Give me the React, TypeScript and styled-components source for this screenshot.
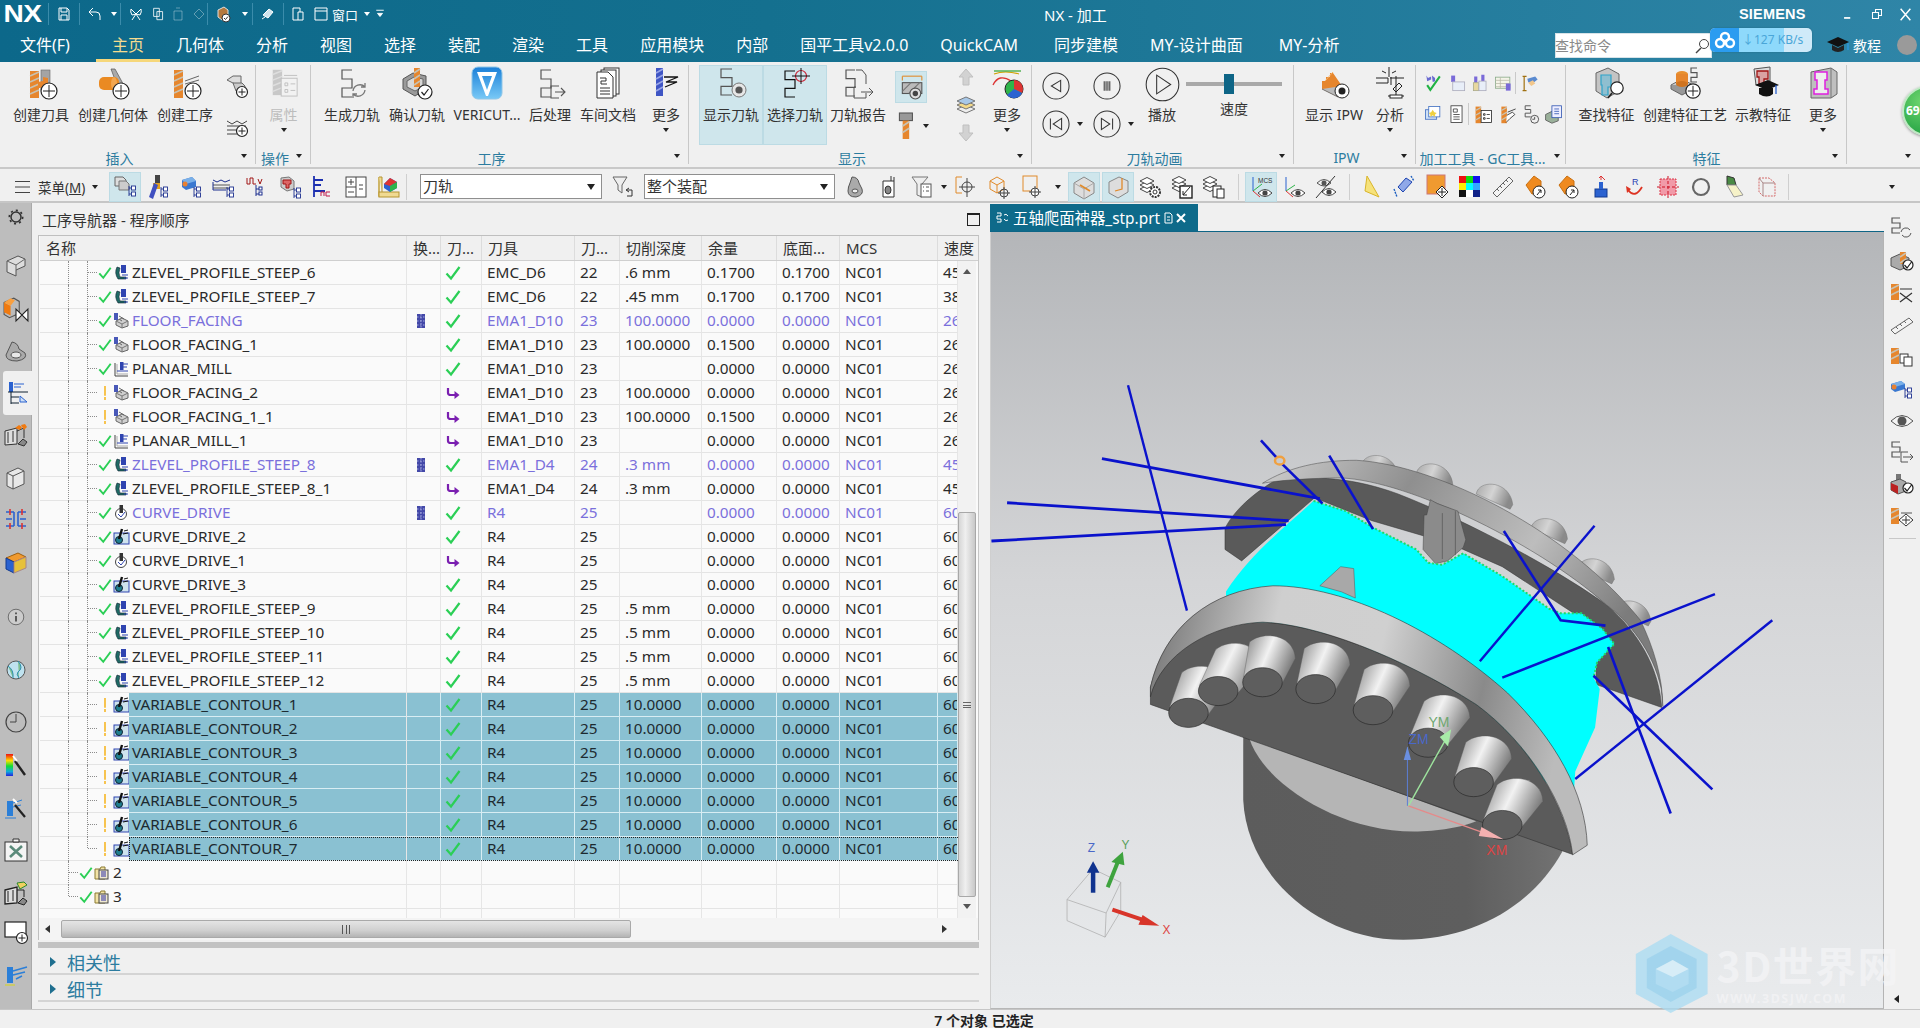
import React from 'react';
import styled, { createGlobalStyle, css } from 'styled-components';

const Global = createGlobalStyle`
  html, body { margin: 0; padding: 0; width: 1920px; height: 1028px; overflow: hidden; background: #f0f0f0; }
  * { box-sizing: border-box; }
  body { font-family: "Noto Sans", "Noto Sans CJK SC", sans-serif; color: #222; }
`;

const Page = styled.div`
  width: 1920px; height: 1028px; display: flex; flex-direction: column; position: relative; overflow: hidden;
`;
const Head = styled.header`
  height: 62px; flex: none; color: #fff;
  background: linear-gradient(90deg, #0c688a 0%, #14708f 40%, #2f85a7 100%);
`;
const TitleBar = styled.div`display: flex; align-items: center; height: 28px;`;
const Logo = styled.div`
  width: 48px; padding-left: 3px; font: bold 24px/28px "Liberation Sans", sans-serif; letter-spacing: -0.5px; flex: none;
  transform: scaleX(1.17); transform-origin: left;
`;
const Quick = styled.div`display: flex; align-items: center; width: 996px; flex: none; height: 28px;`;
const QSlot = styled.div<{ $w: number }>`
  width: ${p => p.$w}px; flex: none; display: flex; align-items: center; justify-content: center; height: 28px;
  font-size: 13px; white-space: nowrap;
`;
const QSep = styled.div`width: 1px; height: 22px; background: #3b8cab; flex: none;`;
const DocTitle = styled.div`font-size: 15px; white-space: nowrap; flex: 1;`;
const Brand = styled.div`
  font: bold 14.5px/28px "Liberation Sans", sans-serif; width: 94px; flex: none; letter-spacing: .2px;
`;
const WinBtn = styled.div`width: 29px; flex: none; display: flex; justify-content: center; align-items: center; height: 28px;`;

const TabRow = styled.div`display: flex; height: 34px; align-items: stretch; position: relative;`;
const Tab = styled.div<{ $active?: boolean; $extra?: number }>`
  padding: 0 ${p => 16 + (p.$extra ?? 0)}px 0 16px; font-size: 16px; line-height: 34px; white-space: nowrap; height: 34px; flex: none;
  ${p => p.$active && css`color: #f5dc8f; border-bottom: 3px solid #f6d77a;`}
`;
const FileTab = styled(Tab)`padding: 0 9px 0 20px; width: 96px;`;
const TabFill = styled.div`flex: 1;`;
const SearchBox = styled.div`
  width: 157px; height: 25px; background: #fff; margin-top: 5px; flex: none; color: #8a8a8a; font-size: 14px; line-height: 25px;
  display: flex; justify-content: space-between; align-items: center; padding-right: 2px; box-shadow: inset 0 0 0 1px #d7e3e8; margin-right: 208px;
`;
const Tutorial = styled.div`
  position: absolute; left: 1826px; top: 0; height: 34px; width: 94px; display: flex; align-items: center; gap: 3px; font-size: 14px;
`;
const Avatar = styled.div`width: 20px; height: 20px; border-radius: 50%; background: #9a9a9a; margin-left: 13px; flex: none;`;

const Cloud = styled.div`
  position: absolute; left: 1710px; top: 28px; width: 102px; height: 24px; border-radius: 5px; overflow: hidden; display: flex;
  background: #cfeaf9; font-size: 12px; color: #4aa6d8; line-height: 24px; box-shadow: 0 0 2px rgba(0,0,0,.2);
`;
const CloudIcon = styled.div`width: 29px; background: #2b9cf0; flex: none; display: flex; align-items: center; justify-content: center;`;
const CloudRate = styled.div`flex: 1; background: linear-gradient(90deg, #8ed9fb 0 62%, transparent 62%); padding-left: 3px; white-space: nowrap;`;

const Ball = styled.div`
  position: absolute; left: 1902px; top: 86px; width: 50px; height: 50px; border-radius: 50%;
  background: radial-gradient(circle at 40% 30%, #6ed66f, #2faa4a 70%); border: 2px solid #bfe8c4; color: #fff;
  font: bold 12px/46px "Noto Sans", sans-serif; padding-left: 2px; box-shadow: 0 1px 3px rgba(0,0,0,.4);
`;

const Ribbon = styled.div`height: 107px; flex: none; display: flex; background: #f0f0f0; border-bottom: 2px solid #c9c9c9; position: relative;`;
const Group = styled.section<{ $w: number; $end?: boolean }>`
  width: ${p => p.$w}px; flex: none; display: flex; flex-direction: column; position: relative;
  ${p => !p.$end && css`&::after { content: ""; position: absolute; right: 0; top: 3px; bottom: 3px; width: 1px; background: #c8c8c8; }`}
`;
const GroupBody = styled.div<{ $pl?: number }>`height: 83px; display: flex; padding-left: ${p => p.$pl ?? 0}px; flex: none;`;
const GroupFoot = styled.div<{ $pr?: number }>`
  flex: 1; display: flex; align-items: center; justify-content: center; position: relative; color: #2c7c9f; font-size: 14px; white-space: nowrap; padding: 3px ${p => p.$pr ?? 17}px 0 0;
`;
const Caret = styled.span<{ $light?: boolean }>`
  display: inline-block; width: 0; height: 0; border-left: 3.5px solid transparent; border-right: 3.5px solid transparent; border-top: 4.5px solid ${p => (p.$light ? '#fff' : '#222')}; flex: none;
`;
const FootCaret = styled(Caret)<{ $r?: number }>`position: absolute; right: ${p => p.$r ?? 9}px; top: 9px;`;
const Large = styled.div<{ $w: number; $on?: boolean }>`
  width: ${p => p.$w}px; flex: none; display: flex; flex-direction: column; align-items: center; padding-top: 5px; font-size: 14px; color: #333; white-space: nowrap;
  ${p => p.$on && css`background: #cfe6ec; box-shadow: inset 0 0 0 1px #bcdbe4; margin-top: 3px; padding-top: 2px;`}
`;
const LargeIcon = styled.div`height: 38px; display: flex; align-items: flex-start; justify-content: center; flex: none;`;
const LargeText = styled.div<{ $dim?: boolean }>`line-height: 20px; height: 20px; ${p => p.$dim && 'color:#bdbdbd;'}`;
const MoreCaret = styled(Caret)`margin-top: 3px;`;
const SmallCol = styled.div<{ $w: number; $ml?: number }>`
  width: ${p => p.$w}px; margin-left: ${p => p.$ml ?? 0}px; flex: none; display: flex; flex-direction: column; align-items: center; justify-content: space-around; padding: 4px 0 1px;
`;
const SmallRow = styled.div`display: flex; align-items: center; justify-content: center; gap: 3px;`;
const Ghost = styled.div`width: 32px; height: 32px; background: #cfe6ec; box-shadow: inset 0 0 0 1px #bcdbe4; display: flex; align-items: center; justify-content: center;`;
const AnimBlock = styled.div`width: 102px; flex: none; display: flex; flex-direction: column; gap: 8px; padding-top: 9px;`;
const AnimRow = styled.div`display: flex;`;
const AnimSlot = styled.div`width: 51px; height: 30px; display: flex; align-items: center; justify-content: flex-start; gap: 7px;`;
const SliderWrap = styled.div`width: 96px; flex: none; margin-left: 6px; display: flex; flex-direction: column; align-items: center; font-size: 14px; color: #333;`;
const Track = styled.div`width: 96px; height: 20px; margin-top: 12px; position: relative; flex: none; &::before { content: ""; position: absolute; left: 0; right: 0; top: 8px; height: 4px; background: #a9a9a9; }`;
const Thumb = styled.div`position: absolute; left: 38px; top: 0; width: 10px; height: 20px; background: #0e6586;`;
const SpeedText = styled.div`margin-top: 5px; line-height: 20px;`;
const ToolGrid = styled.div`display: flex; flex-direction: column; padding: 9px 0 0 6px; gap: 7px; width: 100%;`;
const ToolLine = styled.div`display: flex; align-items: center; height: 24px;`;
const ToolCell = styled.div<{ $w: number }>`width: ${p => p.$w}px; flex: none; display: flex; justify-content: center; align-items: center;`;
const VSep = styled.div`width: 1px; height: 22px; background: #c9c9c9; flex: none;`;

const Toolbar = styled.div`height: 34px; flex: none; display: flex; align-items: center; background: #f0f0f0; border-bottom: 2px solid #c6c6c6; padding-top: 3px;`;
const MenuBtn = styled.div`width: 109px; flex: none; display: flex; align-items: center; padding-left: 14px; font-size: 13.5px; color: #333; gap: 7px;`;
const MenuText = styled.span`white-space: nowrap; u { text-decoration: underline; }`;
const Tb = styled.div<{ $on?: boolean; $w?: number; $ml?: number }>`
  width: ${p => p.$w ?? 33}px; margin-left: ${p => p.$ml ?? 0}px; height: 30px; flex: none; display: flex; align-items: center; justify-content: center;
  ${p => p.$on && css`background: #cfe6ec; box-shadow: inset 0 0 0 1px #bcdbe4;`}
`;
const TbSep = styled.div<{ $ml?: number; $mr?: number }>`
  width: 1px; height: 26px; background: #cfcfcf; flex: none; margin: 0 ${p => p.$mr ?? 7}px 0 ${p => p.$ml ?? 0}px;
`;
const Combo = styled.div<{ $w: number }>`
  width: ${p => p.$w}px; height: 25px; flex: none; background: #fff; border: 1px solid #8f8f8f; font-size: 15px; padding: 0 2px; line-height: 23px;
  display: flex; justify-content: space-between; align-items: center; color: #333;
`;
const ComboCaret = styled(Caret)`border-left-width: 4px; border-right-width: 4px; border-top-width: 6px; margin-right: 4px;`;
const TailCaret = styled(Caret)`margin-left: 90px;`;

const Main = styled.main`flex: 1; display: flex; min-height: 0; background: #f0f0f0;`;
const Side = styled.nav`width: 32px; flex: none; background: #bdbdbd; border-right: 1px solid #a9a9a9;`;
const SideItem = styled.div<{ $h: number; $mt: number; $on?: boolean }>`
  height: ${p => p.$h}px; margin-top: ${p => p.$mt}px; display: flex; align-items: center; justify-content: center;
  ${p => p.$on && css`margin-left: 3px; margin-right: -1px; background: #f0f0f0; border-radius: 3px 0 0 3px;`}
`;
const Nav = styled.section`width: 958px; flex: none; display: flex; flex-direction: column; padding-left: 6px;`;
const NavTitle = styled.div`height: 32px; flex: none; display: flex; justify-content: space-between; align-items: center; padding: 0 8px 0 4px; font-size: 15px; color: #333;`;
const MaxBox = styled.div`width: 13px; height: 13px; border: 1.5px solid #222; border-top-width: 2px; margin-right: 2px;`;
const TableBox = styled.div`width: 941px; flex: none; border: 1px solid #bfbfbf; border-bottom: 0; border-right-color: #c6c6c6; padding-left: 1px; background: #fafafa;`;
const GridCols = css`display: grid; grid-template-columns: 367px 34px 41px 93px 45px 82px 75px 63px 98px 20px;`;
const HeadRow = styled.div`
  display: grid; grid-template-columns: 367px 34px 41px 93px 45px 82px 75px 63px 98px 38px; height: 25px; background: #f0f0f0; border-bottom: 1px solid #cfcfcf; font-size: 15px; color: #333;
`;
const HeadCell = styled.div`padding-left: 6px; line-height: 25px; white-space: nowrap; overflow: hidden; border-right: 1px solid #dcdcdc; &:last-child { border-right: 0; }`;
const BodyWrap = styled.div`display: flex; height: 657px;`;
const List = styled.div`width: 918px; flex: none; overflow: hidden; position: relative;`;
const Row = styled.div`
  ${GridCols}; height: 24px; font-size: 15.3px; width: 918px;
`;
const Cell = styled.div<{ $sel?: boolean; $blue?: boolean }>`
  padding-left: 5px; line-height: 23px; height: 24px; white-space: nowrap; overflow: hidden; border-right: 1px solid #e6e6e6; border-bottom: 1px solid #e4e4e4;
  color: ${p => (p.$blue ? '#7a70dc' : '#2a2a2a')};
  display: flex; align-items: center;
  ${p => p.$sel && css`background: #8ac1d2; border-bottom-color: #d8edf3; border-right-color: #d8edf3; color: #1d2a30;`}
`;
const ChangeCell = styled(Cell)`padding-left: 7px;`;
const StateCell = styled(Cell)`padding-left: 4px;`;
const NameCell = styled.div<{ $lv: number; $last?: boolean }>`
  position: relative; display: flex; align-items: center; height: 24px; border-right: 1px solid #e6e6e6; border-bottom: 1px solid #e4e4e4;
  padding-left: ${p => (p.$lv === 2 ? 58 : 39)}px;
  &::before {
    content: ""; position: absolute; left: 28px; top: 0; bottom: ${p => (p.$lv === 1 && p.$last ? '12px' : '-1px')};
    border-left: 1px dotted #8c8c8c;
  }
`;
const Trunk = styled.span<{ $end?: boolean }>`
  position: absolute; left: 47px; top: 0; bottom: ${p => (p.$end ? '12px' : '-1px')}; border-left: 1px dotted #8c8c8c;
`;
const Twig = styled.span<{ $lv: number }>`
  position: absolute; left: ${p => (p.$lv === 2 ? 48 : 29)}px; top: 11px; width: 9px; border-top: 1px dotted #8c8c8c;
`;
const NameIcons = styled.div`display: flex; align-items: center; flex: none; width: 31px; height: 23px; gap: 1px;`;
const NameText = styled.div<{ $sel?: boolean; $blue?: boolean }>`
  flex: 1; height: 23px; line-height: 23px; padding-left: 3px; white-space: nowrap; color: ${p => (p.$blue ? '#7a70dc' : '#2a2a2a')};
  ${p => p.$sel && css`background: #8ac1d2; color: #1d2a30; box-shadow: 0 1px 0 #d8edf3;`}
`;
const Focus = styled.div`
  position: absolute; left: 89px; right: 0; top: 576px; height: 24px; border: 1px dotted #222; border-right: 0; pointer-events: none;
`;
const ColGuide = styled.div`${GridCols}; height: 11px;`;
const ColLine = styled.div`border-right: 1px solid #e6e6e6;`;
const VScroll = styled.div`width: 18px; flex: none; background: #f2f2f2; display: flex; flex-direction: column; align-items: center; position: relative;`;
const VThumb = styled.div`
  width: 18px; height: 385px; margin-top: 238px; background: linear-gradient(90deg, #d6d6d6, #efefef 40%, #c8c8c8); border: 1px solid #a8a8a8; border-radius: 2px; flex: none;
  display: flex; align-items: center; justify-content: center;
`;
const VGrip = styled.div`width: 8px; height: 6px; border-top: 1px solid #666; border-bottom: 1px solid #666; position: relative; &::after { content: ""; position: absolute; left: 0; right: 0; top: 2px; height: 1px; background: #666; }`;
const UpArrow = styled.span`display: block; margin-top: 8px; width: 0; height: 0; border-left: 4px solid transparent; border-right: 4px solid transparent; border-bottom: 5px solid #555; flex: none;`;
const DownArrow = styled.span`display: block; margin-top: 7px; width: 0; height: 0; border-left: 4px solid transparent; border-right: 4px solid transparent; border-top: 5px solid #555; flex: none;`;
const HScroll = styled.div`width: 941px; height: 22px; flex: none; display: flex; align-items: center; background: #f4f4f4; border-left: 1px solid #bfbfbf; border-right: 1px solid #c6c6c6; padding-left: 6px;`;
const LeftArr = styled.span`width: 0; height: 0; border-top: 4px solid transparent; border-bottom: 4px solid transparent; border-right: 5px solid #333; margin-right: 11px; flex: none;`;
const RightArr = styled.span`width: 0; height: 0; border-top: 4px solid transparent; border-bottom: 4px solid transparent; border-left: 5px solid #333; margin-left: 311px; flex: none;`;
const HThumb = styled.div`
  width: 570px; height: 18px; background: linear-gradient(180deg, #e4e4e4, #cfcfcf 60%, #b4b4b4); border: 1px solid #a9a9a9; border-radius: 2px; flex: none; display: flex; align-items: center; justify-content: center;
`;
const HGrip = styled.div`width: 8px; height: 9px; border-left: 1px solid #555; border-right: 1px solid #555; position: relative; &::after { content: ""; position: absolute; top: 0; bottom: 0; left: 2.5px; width: 1px; background: #555; }`;
const Stripe = styled.div`height: 6px; flex: none; width: 941px; background: #c2c2c2; margin-top: 2px;`;
const Fold = styled.div`
  height: 27px; flex: none; width: 941px; display: flex; align-items: center; border-bottom: 2px solid #d4d4d4; padding: 2px 0 0 12px; color: #2c7c9f; font-size: 18px; gap: 11px;
`;
const FoldArrow = styled.span`width: 0; height: 0; border-top: 5.5px solid transparent; border-bottom: 5.5px solid transparent; border-left: 6px solid #1f6f8f; flex: none;`;

const Stage = styled.section`flex: 1; display: flex; flex-direction: column; min-width: 0;`;
const DocTabs = styled.div`height: 29px; flex: none; display: flex; align-items: flex-end; background: #f0f0f0; border-bottom: 1px solid #0e6586;`;
const DocTab = styled.div`
  width: 208px; height: 27px; background: #0e6a8a; color: #fff; display: flex; align-items: center; padding: 0 5px; font-size: 15.4px; gap: 3px; white-space: nowrap;
`;
const View = styled.div`
  flex: 1; position: relative; background: linear-gradient(180deg, #b4b6b9 0%, #d4d5d7 45%, #e9ebed 100%); border-right: 1px solid #b4b4b4; border-left: 1px solid #cfcfcf; border-bottom: 1px solid #b7b7b7;
`;
const Scene = styled.svg`position: absolute; left: 0; top: 0; width: 100%; height: 100%; overflow: visible; display: block;`;
const Strip = styled.aside`width: 36px; flex: none; padding-top: 10px; display: flex; flex-direction: column; align-items: center; position: relative;`;
const StripItem = styled.div`height: 32px; flex: none; display: flex; align-items: center; justify-content: center;`;
const StripSep = styled.div`width: 27px; height: 1px; background: #c8c8c8; margin-top: 5px; flex: none;`;
const StripArrow = styled.span`
  position: absolute; left: 10px; bottom: 6px; width: 0; height: 0; border-top: 4px solid transparent; border-bottom: 4px solid transparent; border-right: 5px solid #222;
`;
const Status = styled.footer`
  height: 19px; flex: none; background: #f0f0f0; text-align: center; font-size: 14px; line-height: 21px; font-weight: 600; color: #222; padding-left: 48px; border-top: 1px solid #c6c6c6;
`;

const IconSvg = styled.svg<{ $s: number }>`width: ${p => p.$s}px; height: ${p => p.$s}px; display: block; flex: none; overflow: visible;`;

/* ------ drawing primitives ------ */
const Bit = ({ x, y, w = 9, h = 28, c = '#e6862d', s = '#c8c2b2' }: any) => (
  <g>
    <rect x={x} y={y} width={w} height={h} fill={c} />
    {Array.from({ length: Math.floor(h / 6) }).map((_, i) => (
      <path key={i} d={`M${x} ${y + i * 6 + 5}L${x + w} ${y + i * 6 + 1}`} stroke={s} strokeWidth="1.6" />
    ))}
  </g>
);
const Plus = ({ cx, cy, r = 8 }: any) => (
  <g>
    <circle cx={cx} cy={cy} r={r} fill="#fff" stroke="#222" strokeWidth="1.2" />
    <path d={`M${cx - r + 2} ${cy}H${cx + r - 2}M${cx} ${cy - r + 2}V${cy + r - 2}`} stroke="#222" strokeWidth="1" />
  </g>
);
const Chk = ({ cx, cy, r = 7.5 }: any) => (
  <g>
    <circle cx={cx} cy={cy} r={r} fill="#fff" stroke="#222" strokeWidth="1.2" />
    <path d={`M${cx - 3.5} ${cy}l2.5 3l4.5 -6`} stroke="#222" strokeWidth="1.2" fill="none" />
  </g>
);
const Sp = ({ x, y, w = 10, h = 24, c = '#555', sw = 1.2 }: any) => (
  <path d={`M${x + w} ${y}H${x}V${y + h / 3}H${x + w}V${y + (2 * h) / 3}H${x}V${y + h}H${x + w}`} fill="none" stroke={c} strokeWidth={sw} />
);
const Tr = ({ x, y, c = '#1c2f8e' }: any) => (
  <g stroke={c} fill="#fff" strokeWidth=".9">
    <path d={`M${x} ${y}v10M${x} ${y + 2}h2.5M${x} ${y + 8}h2.5`} fill="none" />
    <rect x={x + 2.5} y={y} width="4" height="4" />
    <rect x={x + 2.5} y={y + 6} width="4" height="4" />
  </g>
);
const EyeS = ({ cx, cy }: any) => (
  <g>
    <path d={`M${cx - 7} ${cy}Q${cx} ${cy - 7} ${cx + 7} ${cy}Q${cx} ${cy + 7} ${cx - 7} ${cy}Z`} fill="#fff" stroke="#444" />
    <circle cx={cx} cy={cy} r="2.6" fill="#444" />
  </g>
);
const Layers = ({ x, y }: any) => (
  <g fill="#fff" stroke="#444" strokeWidth="1">
    <path d={`M${x} ${y + 10}l7 -3.5l7 3.5l-7 3.5Z`} />
    <path d={`M${x} ${y + 6}l7 -3.5l7 3.5l-7 3.5Z`} />
    <path d={`M${x} ${y + 2}l7 -3.5l7 3.5l-7 3.5Z`} />
  </g>
);

/* ------ 32 px ribbon pictures ------ */
const big: Record<string, React.ReactNode> = {
  createTool: (<g><rect x="16" y="3" width="9" height="20" fill="#a4a4a4" stroke="#666" strokeWidth=".6" /><Bit x={5} y={4} w={9} h={27} /><path d="M13 15l5-1v-4l5 1v8l-8 2h-2z" fill="#e6862d" /><Plus cx={24} cy={24} /></g>),
  createGeom: (<g><path d="M14 2l4 0l12 22l-6 5z" fill="#a9a9a9" stroke="#555" strokeWidth=".7" /><rect x="2" y="10" width="20" height="13" rx="5" fill="#ea8a22" /><ellipse cx="17" cy="16.5" rx="3" ry="6.5" fill="#f2a650" /><Plus cx={24} cy={24} /></g>),
  createOp: (<g><Bit x={5} y={3} w={9} h={28} /><path d="M16 14L30 9M16 17L30 13M17 20L28 17" stroke="#666" fill="none" /><Plus cx={24} cy={24} /></g>),
  attr: (<g opacity=".55"><Bit x={4} y={3} w={10} h={27} c="#a8a8a8" s="#d0d0d0" /><rect x="13" y="12" width="17" height="19" fill="#f4f4f4" stroke="#999" /><path d="M17 17h3v3h-3zM23 18h5M17 24h3v3h-3zM23 25h5M16 9H30" stroke="#999" fill="none" /></g>),
  gen: (<g><Sp x={6} y={3} w={10} h={27} /><path d="M17 24a7 7 0 0 1 12-4M29 23a7 7 0 0 1-12 4M29 16v4h-4M17 31v-4h4" fill="none" stroke="#777" strokeWidth="1.3" /></g>),
  verify: (<g><path d="M2 12L12 6L25 9V22L14 29L2 22Z" fill="#9a9a9a" stroke="#555" /><path d="M6 14l7-4l9 2v8l-8 4l-8-4z" fill="#d8d8d8" stroke="#666" /><Bit x={13} y={1} w={6} h={19} /><Chk cx={24} cy={25} r={7} /></g>),
  vericut: (<g><defs><linearGradient id="vg" x1="0" y1="0" x2="0" y2="1"><stop offset="0" stopColor="#1a7fd8" /><stop offset="1" stopColor="#79c9f6" /></linearGradient></defs><rect x="1" y="0" width="30" height="32" rx="6" fill="url(#vg)" stroke="#8fc6e8" /><path fillRule="evenodd" d="M6 5H26L17 29H15ZM11 9L16 23L21 9Z" fill="#fff" /></g>),
  post: (<g><Sp x={7} y={3} w={10} h={27} /><path d="M25 19h-8v12h8M21 25h10M27 21l4 4l-4 4" fill="none" stroke="#555" strokeWidth="1.1" /></g>),
  doc: (<g fill="#fff" stroke="#333"><rect x="12" y="1" width="15" height="26" /><rect x="9" y="3" width="15" height="26" /><path d="M5 5H16L21 10V31H5Z" /><path d="M8 11h6v3H9v3h6M8 21h10M8 24h10M8 27h10" fill="none" /></g>),
  moreOp: (<g><Bit x={6} y={1} w={7} h={28} c="#3f55c4" s="#9aa6e8" /><path d="M14 10H28L16 15H27L15 20" stroke="#111" fill="none" strokeWidth="1.3" /></g>),
  show: (<g><Sp x={6} y={2} w={11} h={26} /><circle cx="24" cy="23" r="7" fill="#e6e6e6" stroke="#777" /><circle cx="24" cy="23" r="3.6" fill="#555" /></g>),
  sel: (<g><Sp x={6} y={4} w={10} h={26} c="#111" /><circle cx="22" cy="9" r="5.5" fill="none" stroke="#c23" strokeWidth="1.2" /><path d="M13 9H31M22 1V17" stroke="#111" /></g>),
  report: (<g><Sp x={4} y={3} w={9} h={26} /><path d="M14 3H20L24 8V17M14 20H12V31H24V26" fill="none" stroke="#555" /><path d="M19 25H31M27 21l4 4l-4 4" fill="none" stroke="#555" /></g>),
  stairs: (<g><path d="M4 22V14H8V10H12V6H15L24 19L20 30Z" fill="#e6862d" /><path d="M4 22L20 30L24 19" fill="#bbb" stroke="#777" /><path d="M7 14L15 5" stroke="#f7b56d" /><circle cx="24" cy="24" r="7" fill="#fff" stroke="#222" /><circle cx="24" cy="24" r="3.5" fill="#222" /></g>),
  scope: (<g fill="none" stroke="#222"><path d="M15 0V10M8 4l4 2M22 4l-4 2M2 11H14V16H2M16 11H30M17 10V18M22 9v20M14 29H30M19 22l6-6l3 3l-6 6z" /><rect x="16" y="28" width="12" height="3" fill="#fff" /></g>),
  rainbow: (<g><path d="M3 7Q14 3 28 7" stroke="#d0a000" fill="none" strokeWidth="1.2" /><path d="M3 4H30" stroke="#2fa32f" strokeWidth="1.2" /><path d="M2 18Q8 6 20 14" stroke="#d33" fill="none" strokeWidth="1.3" /><circle cx="23" cy="22" r="9" fill="#2fb44a" stroke="#222" /><path d="M23 22V13A9 9 0 0 1 31 26Z" fill="#d33" /><path d="M23 22L31 26A9 9 0 0 1 16 28Z" fill="#2b62d0" /></g>),
  find: (<g><path d="M5 6L17 1L28 7V24L16 31L5 24Z" fill="#c4c4c4" stroke="#666" /><path d="M10 8H20V20H17V28H11V18H10Z" fill="#8fbfd0" stroke="#2ea3c9" strokeWidth="1.2" /><circle cx="26" cy="21" r="6.2" fill="#fff" stroke="#222" strokeWidth="1.2" /><path d="M21 26l-4 5" stroke="#222" strokeWidth="1.6" /></g>),
  feat: (<g><path d="M2 18L13 12L24 18L13 24Z" fill="#ccc" stroke="#666" /><path d="M2 18v4l11 6l11-6v-4" fill="#999" stroke="#666" /><ellipse cx="13" cy="7" rx="6" ry="3" fill="#e89030" /><rect x="7" y="7" width="12" height="10" fill="#e6862d" /><ellipse cx="13" cy="17" rx="6" ry="3" fill="#cf7420" /><Sp x={22} y={1} w={6} h={14} /><Plus cx={24} cy={24} r={7.2} /></g>),
  teach: (<g><path d="M7 2L23 0V14L9 18Z" fill="#ddd" stroke="#555" /><path d="M10 4H21V12H17V17H12V10H10Z" fill="#d9a3a3" stroke="#a01515" strokeWidth="1.3" /><path d="M8 18L21 13L32 18L20 23Z" fill="#111" /><path d="M12 21V27Q20 32 26 27V21" fill="#111" /><path d="M29 18V27" stroke="#2b62d0" strokeWidth="1.3" /></g>),
  more2: (<g><path d="M4 5L24 1L30 5V27L24 31L4 31Z" fill="#bfbfbf" stroke="#666" /><path d="M24 1V31" stroke="#777" /><path d="M8 5H20V13H18V22H21V27H7V22H10V13H8Z" fill="#eee" stroke="#e020e0" strokeWidth="1.5" /></g>),
};

/* ------ 24 px toolbar and side pictures ------ */
const small: Record<string, React.ReactNode> = {
  addBlock: (<g><path d="M2 6l6-4h8v8h-6z" fill="#ddd" stroke="#666" /><path d="M8 9h9l3 3v5h-9z" fill="#ccc" stroke="#666" /><Plus cx={17} cy={18} r={5.5} /></g>),
  addCrown: (<g><path d="M2 8l5 3l5-3l5 3l5-3M2 13H21M2 17H14" stroke="#444" fill="none" /><path d="M2 21H12" stroke="#444" /><Plus cx={17} cy={18} r={5.5} /></g>),
  tProg: (<g><path d="M2 2h8l3 3v6H2z" fill="#ddd" stroke="#666" /><path d="M6 6h7l3 3v6H6z" fill="#ccc" stroke="#777" /><Tr x={16} y={11} /></g>),
  tTool: (<g><rect x="9" y="0" width="5" height="9" fill="#444" /><rect x="7" y="8" width="7" height="6" fill="#e0a020" /><path d="M3 22L8 8l4 2l-5 14z" fill="#4050c0" /><Tr x={15} y={12} /></g>),
  tGeom: (<g><path d="M3 5L13 2L17 6V12L7 15L3 12Z" fill="#3a78d0" /><path d="M3 5L13 2L17 6L7 9Z" fill="#7ab0e8" /><circle cx="6" cy="9" r="2.5" fill="#e88030" /><Tr x={15} y={12} /></g>),
  tMeth: (<g><path d="M1 5l4 2l4-2l4 2l5-2" stroke="#1c2f8e" fill="none" /><path d="M1 10H18M1 13H18" stroke="#555" /><path d="M1 7V15H14" stroke="#1c2f8e" fill="none" /><Tr x={15} y={12} /></g>),
  tFeat: (<g><path d="M2 3v6h3V3h3v6h3M13 4l2 5l2-5" stroke="#a01515" fill="none" /><path d="M11 10V21M11 14h3M11 19h3" stroke="#1c2f8e" fill="none" /><rect x="14" y="12" width="3" height="3" fill="#fff" stroke="#1c2f8e" /><rect x="14" y="17" width="3" height="3" fill="#fff" stroke="#1c2f8e" /></g>),
  tMach: (<g><path d="M3 3l8-1l5 4v8l-7 2l-6-4z" fill="#ccc" stroke="#777" /><path d="M5 5h8v4h-2v4H8V9H5z" fill="#d66" stroke="#a01515" /><Tr x={16} y={13} /></g>),
  nc: (<g><path d="M3 1V22M3 5H12M3 10H10M3 16H14" stroke="#1c2fb0" strokeWidth="1.8" fill="none" /><path d="M10 21v-4h3v4M15 21v-4h4M15 21h4" stroke="#c0184a" fill="none" /></g>),
  pm: (<g fill="#fff" stroke="#444"><rect x="2" y="2" width="20" height="20" /><path d="M12 2V22M2 12H12" /><path d="M7 4V10M4 7H10M4 17H10M15 10H19M15 14H19" /></g>),
  sheet: (<g><path d="M2 2V21H22" stroke="#c2a13a" fill="none" strokeWidth="1.5" /><rect x="2" y="17" width="20" height="5" fill="#f0da92" stroke="#b59430" /><path d="M2 2H5V17" fill="#f0da92" stroke="#b59430" /><path d="M7 9L13 3L20 7V13L13 17L7 13Z" fill="#2b62d0" /><path d="M7 9L13 3L20 7L13 11Z" fill="#d33" /><path d="M13 11L20 7V13L13 17Z" fill="#2fb44a" /></g>),
  funnelA: (<g fill="none" stroke="#666"><path d="M2 2H16L11 10V18L7 15V10Z" fill="#eee" /><path d="M16 21H21V15H16M18 13l-3 2l3 2" stroke="#333" /></g>),
  part: (<g><path d="M8 2Q14 2 15 8L18 14Q20 20 12 22Q4 22 4 16Q4 12 6 8Z" fill="#aaa" stroke="#555" /><ellipse cx="11" cy="16" rx="3" ry="2" fill="#eee" stroke="#555" /></g>),
  tank: (<g fill="#fff" stroke="#333"><path d="M6 6H17V22H6Z" /><path d="M14 1V6M17 2V6" /><ellipse cx="11" cy="15" rx="3" ry="4" fill="#888" /></g>),
  funnelB: (<g><path d="M2 2H18L12 9V22L7 20V9Z" fill="#eee" stroke="#777" /><rect x="11" y="9" width="10" height="13" fill="#fff" stroke="#555" /><path d="M13 12h1M16 12h3M13 16h1M16 16h3" stroke="#555" /></g>),
  crossO: (<g><path d="M2 2V18H8" fill="none" stroke="#e08a2a" /><path d="M2 2H8" stroke="#e08a2a" /><circle cx="13" cy="12" r="5" fill="none" stroke="#444" /><path d="M13 3V22M5 12H21" stroke="#444" /></g>),
  cubeO: (<g><path d="M3 6L10 2L17 6V14L10 18L3 14Z" fill="none" stroke="#e08a2a" /><path d="M3 6L10 10L17 6M10 10V18" stroke="#e08a2a" fill="none" /><circle cx="17" cy="18" r="4" fill="none" stroke="#444" /><path d="M17 12V24M11 18H23" stroke="#444" /></g>),
  squareO: (<g><rect x="3" y="1" width="14" height="15" fill="none" stroke="#e08a2a" /><circle cx="15" cy="17" r="4" fill="#fff" stroke="#444" /><path d="M15 11V23M9 17H21" stroke="#444" /></g>),
  hlCube: (<g><path d="M2 8L12 2L22 8V18L12 24L2 18Z" fill="#ddd" stroke="#888" /><path d="M2 8L12 14L22 8M12 14V24" stroke="#aaa" fill="none" /><path d="M8 10L18 16" stroke="#e08a2a" strokeWidth="1.6" /></g>),
  hlCyl: (<g><path d="M3 7L13 2L22 6V17L12 23L3 18Z" fill="#ddd" stroke="#888" /><path d="M16 3L16 14L9 16" stroke="#e08a2a" fill="none" strokeWidth="1.3" /></g>),
  layGear: (<g><Layers x={1} y={4} /><circle cx="16" cy="17" r="5" fill="#fff" stroke="#333" strokeWidth="2" strokeDasharray="2 1" /><circle cx="16" cy="17" r="2" fill="#fff" stroke="#333" /></g>),
  layEdit: (<g><Layers x={1} y={3} /><rect x="9" y="11" width="12" height="12" fill="#fff" stroke="#222" strokeWidth="1.4" /><path d="M12 20L19 12M12 20v-4M12 20h4" stroke="#222" fill="none" /></g>),
  layCopy: (<g><Layers x={1} y={3} /><rect x="11" y="11" width="8" height="11" fill="#fff" stroke="#222" /><rect x="15" y="14" width="7" height="9" fill="#fff" stroke="#222" /></g>),
  mcs: (<g><path d="M4 16V2" stroke="#2b62d0" /><path d="M4 16L13 9" stroke="#2fb44a" /><path d="M4 16L11 22" stroke="#d33" /><text x="9" y="8" fontSize="6.5" fontFamily="Liberation Sans, sans-serif" fill="#333">MCS</text><EyeS cx={16} cy={18} /></g>),
  axisEye: (<g><path d="M4 16V2" stroke="#2b62d0" /><path d="M4 16L13 10" stroke="#2fb44a" /><path d="M4 16L11 22" stroke="#d33" /><EyeS cx={16} cy={18} /></g>),
  noEye: (<g><path d="M3 8Q10 1 17 8Q10 14 3 8Z" fill="none" stroke="#555" /><circle cx="10" cy="8" r="2.5" fill="#555" /><EyeS cx={15} cy={17} /><path d="M2 23L21 1" stroke="#333" /></g>),
  tri: (<g><path d="M8 1L20 22L6 16Z" fill="#f6e27a" stroke="#d9b52b" /></g>),
  diam: (<g><path d="M6 12L14 3L20 7L11 17Z" fill="#8fa8e8" stroke="#1f45b0" /><path d="M2 14L5 22M19 1L22 6" stroke="#1f60c0" strokeDasharray="2 1" strokeWidth="1.4" /></g>),
  orangeMove: (<g><rect x="2" y="0" width="18" height="19" fill="#f09a30" stroke="#c77" /><path d="M17 11L23 17L17 23L11 17Z" fill="#fff" stroke="#222" /><path d="M17 13V21M13 17H21" stroke="#222" /></g>),
  colors: (<g><rect x="1" y="1" width="7" height="7" fill="#e11" /><rect x="8" y="1" width="7" height="7" fill="#1d1" /><rect x="15" y="1" width="7" height="7" fill="#11e" /><rect x="1" y="8" width="7" height="7" fill="#fe0" /><rect x="8" y="8" width="7" height="7" fill="#0ff" /><rect x="15" y="8" width="7" height="7" fill="#3af" /><rect x="1" y="15" width="7" height="7" fill="#111" /><rect x="8" y="15" width="7" height="7" fill="#fff" /><rect x="15" y="15" width="7" height="7" fill="#128" /></g>),
  ruler: (<g><path d="M2 18L18 2L22 6L6 22Z" fill="#f4f4f4" stroke="#666" /><path d="M6 14l2 2M9 11l2 2M12 8l2 2M15 5l2 2" stroke="#666" /></g>),
  book: (<g><path d="M2 10L10 1L17 6V18L8 19Z" fill="#ef8a1f" stroke="#c86f10" /><circle cx="15" cy="17" r="6" fill="#fff" stroke="#222" /><path d="M13 20l4-5M14 15h3v3" stroke="#222" fill="none" /></g>),
  stand: (<g><rect x="5" y="14" width="12" height="8" fill="#2b62d0" stroke="#123a90" /><rect x="9" y="7" width="4" height="7" fill="#2b62d0" /><path d="M11 5V1M11 1l-2 2M15 5l-4-4" stroke="#d33" fill="none" /></g>),
  redArrow: (<g><path d="M5 15Q12 24 19 12" stroke="#d32" strokeWidth="1.8" fill="none" /><path d="M3 11l5 3l-4 4z" fill="#d32" /><text x="9" y="10" fontSize="9" fill="#2b42b0" fontFamily="Liberation Sans, sans-serif">R</text></g>),
  redCross: (<g><rect x="4" y="4" width="16" height="16" fill="#f19aa8" stroke="#d34" strokeDasharray="2 1" /><path d="M12 1V23M1 12H23" stroke="#c12" strokeDasharray="3 2" /></g>),
  ring: (<circle cx="12" cy="12" r="8" fill="none" stroke="#666" strokeWidth="2.2" />),
  lamp: (<g><path d="M5 1L12 3L14 10L5 10Z" fill="#4a8a44" stroke="#333" /><path d="M5 10L14 10L21 20L12 22Z" fill="#f6f2c8" stroke="#999" /></g>),
  redBox: (<g fill="none" stroke="#d46a6a"><path d="M4 3H14L20 8V21H8L4 17Z" strokeDasharray="2 1" /><path d="M4 3L8 8H20M8 8V21" stroke="#a88" /></g>),
  gear: (<g fill="none" stroke="#333"><circle cx="12" cy="12" r="6" strokeWidth="1.8" /><circle cx="12" cy="12" r="8" strokeWidth="2" strokeDasharray="2.5 3.7" /></g>),
  block: (<g><path d="M3 7L14 2L21 5V12L12 16V22L3 18Z" fill="#ddd" stroke="#555" /><path d="M3 7L12 11L21 5M12 11V16" stroke="#666" fill="none" /></g>),
  orangeBlock: (<g><path d="M1 6L10 2L15 5V16L6 20L1 17Z" fill="#bbb" stroke="#555" /><path d="M1 6L7 9V18L1 15Z" fill="#f07a10" /><path d="M1 6L7 2L11 4L7 9Z" fill="#f9a040" /><path d="M12 12V23L23 12V23Z" fill="#fff" stroke="#222" /></g>),
  gray: (<g><path d="M8 3Q14 4 15 10L21 14Q24 20 13 22Q2 22 2 16Z" fill="#aaa" stroke="#555" /><ellipse cx="12" cy="16" rx="5" ry="3" fill="#e8e8e8" stroke="#555" /></g>),
  navOp: (<g><rect x="3" y="1" width="4" height="10" fill="#2b62d0" /><path d="M8 3H18M8 6H15" stroke="#2b62d0" /><path d="M2 11H22M5 11V23M5 16H13M5 22H13" stroke="#123" /><path d="M14 15V21H21Z" fill="#cfe0f5" stroke="#2b62d0" /></g>),
  mach: (<g><path d="M1 8L13 5V21L1 22Z" fill="#ddd" stroke="#333" /><path d="M4 9V20M9 8V19M13 8L20 5V15" stroke="#333" fill="none" /><path d="M11 5l4-3l3 2l-2 3zM17 2l4-1l2 3l-3 3z" fill="#f07a10" /><path d="M14 21l5-5l4 3l-3 4z" fill="#888" stroke="#333" /></g>),
  cubeLine: (<g fill="#e8e8e8" stroke="#555"><path d="M3 7L14 2L20 5V18L9 23L3 20Z" /><path d="M3 7L9 10V23M9 10L20 5" fill="none" /></g>),
  netw: (<g><path d="M2 5H10M2 12H8M2 19H10M14 5H22M16 12H22M14 19H22M10 5V19M14 5V19" stroke="#2b62d0" strokeWidth="1.6" /><path d="M6 2V8M6 16V22M18 2V8M18 16V22" stroke="#d33" strokeWidth="1.6" /></g>),
  stack: (<g><path d="M2 8L14 3L22 7L10 12Z" fill="#f09a30" stroke="#a06010" /><path d="M2 8V19L10 23V12Z" fill="#2b62d0" stroke="#123a90" /><path d="M10 12L22 7V18L10 23Z" fill="#e6c13a" stroke="#a88" /></g>),
  info: (<g><circle cx="12" cy="12" r="8.5" fill="#ccc" stroke="#666" /><path d="M12 7V9M12 11V17" stroke="#333" strokeWidth="1.6" /></g>),
  globe: (<g><circle cx="12" cy="12" r="9" fill="#bfe2ef" stroke="#555" /><path d="M4 8Q10 12 9 20M14 3Q20 10 14 14Q12 16 15 20" stroke="#2b8fb0" fill="#7fbf8f" strokeWidth="1" /></g>),
  clock: (<g fill="none" stroke="#444"><circle cx="12" cy="12" r="10" strokeWidth="1.2" /><path d="M12 4V12H6" /></g>),
  spectrum: (<g><defs><linearGradient id="spec" x1="0" y1="0" x2="0" y2="1"><stop offset="0" stopColor="#e11" /><stop offset=".3" stopColor="#fd0" /><stop offset=".55" stopColor="#1d3" /><stop offset=".8" stopColor="#1ad" /><stop offset="1" stopColor="#22d" /></linearGradient></defs><rect x="2" y="1" width="7" height="22" fill="url(#spec)" /><path d="M11 8L21 22" stroke="#222" strokeWidth="2.4" /><path d="M9 3l4 5" stroke="#fff" strokeWidth="2" /></g>),
  wandBit: (<g><rect x="3" y="5" width="6" height="15" fill="#2b7fd8" /><path d="M1 22h11M9 7l9-3M9 11l8-2" stroke="#2b7fd8" fill="none" /><path d="M11 9L21 21" stroke="#222" strokeWidth="2.2" /><path d="M9 3l4 4" stroke="#fff" strokeWidth="2" /></g>),
  tools: (<g><rect x="1" y="4" width="22" height="19" fill="#f4f4f4" stroke="#333" /><path d="M9 1h6v3H9z" fill="#f4f4f4" stroke="#333" /><path d="M6 8L18 19M18 8L6 19" stroke="#5a8a7a" strokeWidth="2.6" /></g>),
  machOpen: (<g><path d="M1 8L13 5V21L1 22Z" fill="#ddd" stroke="#222" strokeWidth="1.3" /><path d="M4 9V20M9 8V19M13 8L20 8V15" stroke="#222" fill="none" /><path d="M13 1L20 0L23 3L16 7Z" fill="#f0d060" stroke="#2a8a2a" /><path d="M14 21l5-5l4 3l-3 4z" fill="#888" stroke="#222" /></g>),
  newWin: (<g><rect x="1" y="2" width="21" height="15" fill="#fff" stroke="#222" strokeWidth="1.2" /><Plus cx={18} cy={18} r={5.5} /></g>),
  navOp2: (<g><rect x="3" y="3" width="6" height="16" fill="#2b7fd8" /><path d="M1 21h10" stroke="#cc5" strokeWidth="1.6" /><path d="M9 7L23 3M9 11L21 8M12 15L18 12" stroke="#2b7fd8" fill="none" strokeWidth="1.4" /></g>),
  sGen: (<g><Sp x={2} y={1} w={8} h={15} /><path d="M11 15a5 5 0 0 1 9-2M21 16a5 5 0 0 1-9 2" fill="none" stroke="#555" /></g>),
  sVer: (<g><path d="M1 9L10 5L19 9V17L10 21L1 17Z" fill="#aaa" stroke="#555" /><Bit x={10} y={3} w={6} h={12} /><Chk cx={18} cy={16} r={5} /></g>),
  sDel: (<g><Bit x={1} y={3} w={8} h={16} /><path d="M10 8H22M10 12L22 21M22 12L10 21" stroke="#333" fill="none" strokeWidth="1.2" /></g>),
  sRul: (<g><path d="M1 17L19 5L23 9L5 21Z" fill="#f4f4f4" stroke="#666" /><path d="M6 14l2 2M10 11l2 2M14 8l2 2" stroke="#666" /></g>),
  sCopy: (<g><Bit x={1} y={3} w={8} h={16} /><rect x="10" y="9" width="8" height="9" fill="#fff" stroke="#333" /><rect x="14" y="12" width="8" height="9" fill="#fff" stroke="#333" /></g>),
  sGeom: (<g><path d="M1 7L11 4L15 7V12L5 15L1 12Z" fill="#3a78d0" /><path d="M1 7L11 4L15 7L5 10Z" fill="#7ab0e8" /><circle cx="4" cy="10" r="2.5" fill="#e88030" /><Tr x={15} y={11} /></g>),
  sEye: (<g><path d="M1 12Q12 1 23 12Q12 23 1 12Z" fill="#f4f4f4" stroke="#555" /><circle cx="12" cy="12" r="4.5" fill="#555" /></g>),
  sPost: (<g><Sp x={2} y={1} w={8} h={15} /><path d="M18 11H11V21H18M13 16H23M20 13l3 3l-3 3" fill="none" stroke="#555" /></g>),
  sBox: (<g><rect x="6" y="1" width="5" height="9" fill="#777" /><path d="M1 9L10 6L16 9V18L8 21L1 17Z" fill="#aaa" stroke="#555" /><path d="M1 10L8 13V21L1 17Z" fill="#b22" /><Chk cx={18} cy={15} r={5} /></g>),
  sMove: (<g><Bit x={1} y={3} w={8} h={16} /><path d="M11 8H22" stroke="#555" /><path d="M16 9L23 15L16 21L9 15Z" fill="#fff" stroke="#333" /><path d="M16 11V19M12 15H20" stroke="#333" /></g>),
  upArr: (<path d="M12 2L19 10H15V18H9V10H5Z" fill="#d2d2d2" stroke="#c0c0c0" />),
  downArr: (<path d="M12 22L19 14H15V6H9V14H5Z" fill="#d2d2d2" stroke="#c0c0c0" />),
  lay: (<g><path d="M3 16l9-4l9 4l-9 4Z" fill="#eee" stroke="#777" /><path d="M3 12l9-4l9 4l-9 4Z" fill="#f3d98a" stroke="#777" /><path d="M3 8l9-4l9 4l-9 4Z" fill="#a8c8e8" stroke="#777" /></g>),
  cutBox: (<g><path d="M4 2H22" stroke="#e08a2a" /><path d="M4 2V6M22 2V6" stroke="#e08a2a" /><rect x="4" y="8" width="18" height="10" fill="#bbb" stroke="#555" /><path d="M4 16L12 8M10 18L20 8" stroke="#777" /><circle cx="16" cy="18" r="5" fill="#ddd" stroke="#555" /><circle cx="16" cy="18" r="2.5" fill="#444" /></g>),
  mill: (<g><rect x="5" y="0" width="12" height="7" fill="#999" stroke="#555" /><Bit x={8} y={7} w={6} h={17} /></g>),
  gcA: (<g><path d="M3 2l2 3l4-2v4l-5 2z" fill="#6a6ad0" /><path d="M4 14l4 6l12-17" stroke="#21b344" strokeWidth="2.6" fill="none" /><path d="M10 2l4 3v4l-3 1z" fill="#6a6ad0" /></g>),
  gcB: (<g><path d="M4 2h5v8H4z" fill="#7a6ad8" /><rect x="6" y="10" width="15" height="11" fill="#e8eef8" stroke="#aab" /></g>),
  gcC: (<g><path d="M4 3h4v8H4zM13 1h4v8h-4z" fill="#7a6ad8" /><rect x="3" y="11" width="7" height="10" fill="#e8d8a0" stroke="#aa8" /><rect x="10" y="9" width="9" height="12" fill="#e8eef8" stroke="#aab" /></g>),
  gcD: (<g><rect x="2" y="4" width="18" height="14" fill="#f4f4e8" stroke="#8a8" /><path d="M2 8H20M2 12H20M2 16H20M8 4V18" stroke="#bba" /><rect x="15" y="12" width="6" height="9" fill="#7a6ad8" /></g>),
  gcE: (<g><path d="M4 3V21M2 3H7M2 21H7" stroke="#a07010" strokeWidth="1.5" /><path d="M8 6L18 3L21 7L13 13L9 10Z" fill="#5a8ad0" /><path d="M9 11L15 8L18 12L13 15Z" fill="#f2c78c" /></g>),
  gcF: (<g><rect x="2" y="6" width="14" height="12" fill="#cfe0f5" stroke="#3a6ac0" /><rect x="6" y="2" width="14" height="13" fill="#fff" stroke="#3a6ac0" /><path d="M11 6l2 3l3 1l-2 2v3l-3-2l-3 2v-3l-2-2l3-1z" fill="#f0d040" /></g>),
  gcG: (<g fill="#fff" stroke="#333"><rect x="5" y="1" width="14" height="21" /><path d="M8 5h5v4H8zM8 12h8M8 15h8M8 18h8" fill="none" /></g>),
  gcH: (<g><Bit x={2} y={2} w={7} h={21} /><rect x="9" y="7" width="13" height="15" fill="#fff" stroke="#222" /><path d="M12 11h2v2h-2zM16 12h4M12 16h2v2h-2zM16 17h4" stroke="#222" fill="none" /></g>),
  gcI: (<g><Bit x={3} y={2} w={7} h={21} /><path d="M11 9L21 5M10 13L17 9L20 12L14 17L9 22" stroke="#222" fill="#fff" /></g>),
  gcJ: (<g><Sp x={4} y={1} w={7} h={14} /><circle cx="16" cy="18" r="5" fill="none" stroke="#333" /><path d="M16 15v3h-3" stroke="#333" fill="none" /></g>),
  gcK: (<g><path d="M2 12L10 8L18 11V20L10 23L2 19Z" fill="#9ab09a" stroke="#555" /><rect x="10" y="1" width="12" height="15" fill="#eef" stroke="#2b52b0" /><path d="M13 5H19M13 8H19M13 11H19" stroke="#2b52b0" /></g>),
};

const Big = ({ n, s = 32 }: { n: string; s?: number }) => <IconSvg $s={s} viewBox="0 0 32 32">{big[n]}</IconSvg>;
const Ico = ({ n, s = 24 }: { n: string; s?: number }) => <IconSvg $s={s} viewBox="0 0 24 24">{small[n]}</IconSvg>;
const WhiteSvg = styled.svg`display: block; flex: none;`;
const White = ({ children, w = 16, h = 16 }: any) => (
  <WhiteSvg width={w} height={h} viewBox="0 0 16 16" fill="none" stroke="#fff" strokeWidth="1">{children}</WhiteSvg>
);
const Round = ({ r = 13, inner }: any) => (
  <WhiteSvg width={r * 2 + 2} height={r * 2 + 2} viewBox="-15 -15 30 30" fill="none" stroke="#333" strokeWidth={r > 14 ? 0.9 : 1.1}>
    <circle r="14" />
    {inner}
  </WhiteSvg>
);

const Large1 = ({ w, icon, text, dim, more, on }: any) => (
  <Large $w={w} $on={on}>
    <LargeIcon><Big n={icon} s={icon === 'attr' ? 30 : 32} /></LargeIcon>
    <LargeText $dim={dim}>{text}</LargeText>
    {more && <MoreCaret />}
  </Large>
);

/* ------ tree icons ------ */
const Check = ({ s = 16 }: { s?: number }) => (
  <IconSvg $s={s} viewBox="0 0 16 16"><path d="M1.5 8.5L6 13.5L14.5 2" fill="none" stroke="#2bcf56" strokeWidth="2.2" /></IconSvg>
);
const Warn = () => <IconSvg $s={14} viewBox="0 0 16 16"><path d="M8 0V11M8 12.5V16" stroke="#f7c24a" strokeWidth="2.2" /></IconSvg>;
const Hook = () => <IconSvg $s={16} viewBox="0 0 16 16"><path d="M3 3V8Q3 10 6 10H12" stroke="#7a1fb0" strokeWidth="2.2" fill="none" /><path d="M9.5 6L14.5 10L9.5 14Z" fill="#7a1fb0" /></IconSvg>;
const Change = () => <IconSvg $s={14} viewBox="0 0 14 14"><rect x="3" y="0" width="8" height="14" fill="#4348a8" /><path d="M3 3h8M3 7h8M3 11h8M7 0v14" stroke="#a6aae0" strokeDasharray="1.5 1.5" /></IconSvg>;
const OpIcon = ({ t }: { t: string }) => (
  <IconSvg $s={16} viewBox="0 0 16 16">
    {t === 'z' && (<g><path d="M4 2Q1 8 5 14H13V12H7Q5 8 7 3Z" fill="#1f6a64" stroke="#123" strokeWidth=".6" /><rect x="8" y="0" width="5" height="8" fill="#2f44b0" /><path d="M9 10h6M11 13h4" stroke="#2f44b0" /></g>)}
    {t === 'f' && (<g><path d="M3 8L9 5L15 8V13L9 15L3 12Z" fill="#cfcfcf" stroke="#666" /><path d="M3 8L9 11L15 8M9 11V15" stroke="#777" fill="none" /><rect x="1" y="0" width="4" height="7" fill="#4858b8" /><path d="M6 3L11 6M6 6L9 8" stroke="#666" /></g>)}
    {t === 'p' && (<g><path d="M2 2V15H15" stroke="#444" fill="none" /><path d="M4 3V13H15" stroke="#aaa" fill="none" /><rect x="7" y="1" width="3.5" height="8" fill="#2f44b0" /><path d="M10 3H15M10 6H14M4 10H15" stroke="#2f44b0" /></g>)}
    {t === 'c' && (<g><circle cx="8" cy="9" r="5.5" fill="#fff" stroke="#444" /><path d="M5 9l3 3l4-5" stroke="#2f44b0" fill="none" /><rect x="6.5" y="0" width="3.5" height="8" fill="#333" /></g>)}
    {t === 'v' && (<g><rect x="1" y="4" width="15" height="11" fill="#cfe3ee" stroke="#2f44b0" /><circle cx="6" cy="11" r="3.5" fill="#1e7f8f" stroke="#123" /><path d="M9 0L6 10" stroke="#111" strokeWidth="2.4" /><path d="M11 2L15 1M10 5L15 4" stroke="#111" /></g>)}
    {t === 'g' && (<g><path d="M1 4H6L7 2H11V14H1Z" fill="#f2e3a6" stroke="#8a7a30" /><rect x="5" y="5" width="9" height="9" fill="#efe9d0" stroke="#444" /><path d="M7 7h5M7 9h5M7 11h5" stroke="#2b2ba0" /></g>)}
  </IconSvg>
);

type R = { name: string; op: string; st: 'ok' | 'warn'; blue?: boolean; chg?: boolean; done: 'ok' | 'hook'; tool: string; no: string; depth: string; stock: string; floor: string; speed: string; sel?: boolean };
const mk = (name: string, op: string, st: 'ok' | 'warn', done: 'ok' | 'hook', tool: string, no: string, depth: string, stock: string, floor: string, speed: string, blue = false, sel = false): R =>
  ({ name, op, st, done, tool, no, depth, stock, floor, speed, blue, chg: blue, sel });
const rows: R[] = [
  mk('ZLEVEL_PROFILE_STEEP_6', 'z', 'ok', 'ok', 'EMC_D6', '22', '.6 mm', '0.1700', '0.1700', '45'),
  mk('ZLEVEL_PROFILE_STEEP_7', 'z', 'ok', 'ok', 'EMC_D6', '22', '.45 mm', '0.1700', '0.1700', '38'),
  mk('FLOOR_FACING', 'f', 'ok', 'ok', 'EMA1_D10', '23', '100.0000', '0.0000', '0.0000', '26', true),
  mk('FLOOR_FACING_1', 'f', 'ok', 'ok', 'EMA1_D10', '23', '100.0000', '0.1500', '0.0000', '26'),
  mk('PLANAR_MILL', 'p', 'ok', 'ok', 'EMA1_D10', '23', '', '0.0000', '0.0000', '26'),
  mk('FLOOR_FACING_2', 'f', 'warn', 'hook', 'EMA1_D10', '23', '100.0000', '0.0000', '0.0000', '26'),
  mk('FLOOR_FACING_1_1', 'f', 'warn', 'hook', 'EMA1_D10', '23', '100.0000', '0.1500', '0.0000', '26'),
  mk('PLANAR_MILL_1', 'p', 'ok', 'hook', 'EMA1_D10', '23', '', '0.0000', '0.0000', '26'),
  mk('ZLEVEL_PROFILE_STEEP_8', 'z', 'ok', 'ok', 'EMA1_D4', '24', '.3 mm', '0.0000', '0.0000', '45', true),
  mk('ZLEVEL_PROFILE_STEEP_8_1', 'z', 'ok', 'hook', 'EMA1_D4', '24', '.3 mm', '0.0000', '0.0000', '45'),
  mk('CURVE_DRIVE', 'c', 'ok', 'ok', 'R4', '25', '', '0.0000', '0.0000', '60', true),
  mk('CURVE_DRIVE_2', 'v', 'ok', 'ok', 'R4', '25', '', '0.0000', '0.0000', '60'),
  mk('CURVE_DRIVE_1', 'c', 'ok', 'hook', 'R4', '25', '', '0.0000', '0.0000', '60'),
  mk('CURVE_DRIVE_3', 'v', 'ok', 'ok', 'R4', '25', '', '0.0000', '0.0000', '60'),
  mk('ZLEVEL_PROFILE_STEEP_9', 'z', 'ok', 'ok', 'R4', '25', '.5 mm', '0.0000', '0.0000', '60'),
  mk('ZLEVEL_PROFILE_STEEP_10', 'z', 'ok', 'ok', 'R4', '25', '.5 mm', '0.0000', '0.0000', '60'),
  mk('ZLEVEL_PROFILE_STEEP_11', 'z', 'ok', 'ok', 'R4', '25', '.5 mm', '0.0000', '0.0000', '60'),
  mk('ZLEVEL_PROFILE_STEEP_12', 'z', 'ok', 'ok', 'R4', '25', '.5 mm', '0.0000', '0.0000', '60'),
  ...[1, 2, 3, 4, 5, 6, 7].map(i => mk(`VARIABLE_CONTOUR_${i}`, 'v', 'warn', 'ok', 'R4', '25', '10.0000', '0.0000', '0.0000', '60', false, true)),
];
const heads = ['名称', '换...', '刀...', '刀具', '刀...', '切削深度', '余量', '底面...', 'MCS', '速度'];

const sideData = [
  ['gear', 217, 28, 20], ['block', 266, 40], ['orangeBlock', 309, 40, 26], ['gray', 351, 40], ['navOp', 393, 44, 24, 1], ['mach', 435, 40],
  ['cubeLine', 478, 40], ['netw', 519, 40], ['stack', 562, 40], ['info', 617, 40, 22], ['globe', 670, 40, 24], ['clock', 722, 40, 24],
  ['spectrum', 765, 40], ['wandBit', 808, 40], ['tools', 850, 40], ['machOpen', 894, 40], ['newWin', 932, 40], ['navOp2', 976, 40],
] as any[];
let bottom = 203;
const side = sideData.map(([n, c, h, s, on]) => {
  const mt = c - h / 2 - bottom;
  bottom = c + h / 2;
  return { n, h, mt, s: s ?? 24, on: !!on };
});

const tbA = ['tProg', 'tTool', 'tGeom', 'tMeth', 'tFeat', 'tMach', 'nc', 'pm', 'sheet'];
const tbC = ['tri', 'diam', 'orangeMove', 'colors', 'ruler', 'book', 'book', 'stand', 'redArrow', 'redCross', 'ring', 'lamp', 'redBox'];
const strip = ['sGen', 'sVer', 'sDel', 'sRul', 'sCopy', 'sGeom', 'sEye', 'sPost', 'sBox', 'sMove'];

const Line = ({ d, w = 2.6 }: { d: string; w?: number }) => (
  <path d={d} fill="none" stroke="#0a12cc" strokeWidth={w} vectorEffect="non-scaling-stroke" />
);
const Thin = ({ d, c = '#3a3a3a', w = .7 }: any) => <path d={d} fill="none" stroke={c} strokeWidth={w} vectorEffect="non-scaling-stroke" />;
const pegs = [[398, 922, 415, 805], [455, 865, 480, 745], [540, 842, 545, 725], [642, 860, 650, 742], [752, 915, 765, 797], [858, 1000, 880, 880], [945, 1103, 960, 987], [1000, 1215, 1020, 1098]];
const bumps = [[765, 275], [870, 297], [985, 350], [1090, 440], [1180, 545], [1250, 655]];

const Part = () => (
  <Scene viewBox="990 232 895 776" preserveAspectRatio="none">
    <defs>
      <linearGradient id="rimF" x1="0" y1="0" x2="1" y2=".15">
        <stop offset="0" stopColor="#6e6e6e" /><stop offset=".3" stopColor="#cfcfcf" /><stop offset=".55" stopColor="#d0d0d0" /><stop offset=".8" stopColor="#8a8a8a" /><stop offset="1" stopColor="#bbb" />
      </linearGradient>
      <linearGradient id="rimR" x1="0" y1="0" x2="1" y2=".4">
        <stop offset="0" stopColor="#cfcfcf" /><stop offset=".35" stopColor="#8f8f8f" /><stop offset=".7" stopColor="#bdbdbd" /><stop offset="1" stopColor="#7c7c7c" />
      </linearGradient>
      <linearGradient id="pegG" x1="0" y1=".2" x2="1" y2=".6">
        <stop offset="0" stopColor="#8d8d8d" /><stop offset=".45" stopColor="#f2f2f2" /><stop offset="1" stopColor="#6d6d6d" />
      </linearGradient>
      <linearGradient id="bumpG" x1="0" y1="0" x2="1" y2=".3">
        <stop offset="0" stopColor="#a8a8a8" /><stop offset=".5" stopColor="#d4d4d4" /><stop offset="1" stopColor="#8a8a8a" />
      </linearGradient>
      <linearGradient id="bodyG" x1="0" y1="0" x2="1" y2="0">
        <stop offset="0" stopColor="#5c5c5c" /><stop offset=".7" stopColor="#5e5e5e" /><stop offset="1" stopColor="#727272" />
      </linearGradient>
    </defs>
    <g transform="translate(980 360) scale(.523 .3827)">
      <path d="M503 985L503 1150C510 1350 650 1515 810 1515C950 1515 1060 1420 1115 1285L1115 1200Z" fill="url(#bodyG)" />
      <path d="M515 990C540 1100 680 1232 830 1232C875 1232 925 1220 950 1205Z" fill="#b5b5b5" />
      {bumps.map(([x, y], i) => (
        <path key={i} d={`M${x - 35} ${y}C${x - 30} ${y - 40} ${x + 30} ${y - 35} ${x + 35} ${y + 28}L${x + 30} ${y + 40}Z`} fill="url(#bumpG)" stroke="#777" strokeWidth=".5" vectorEffect="non-scaling-stroke" />
      ))}
      <path d="M468 495L468 440C490 380 540 335 560 318C640 298 720 310 800 350C950 430 1120 560 1200 640C1260 710 1300 800 1306 908L1180 848L1180 700L1000 540L900 480L750 420L640 360L500 525Z" fill="#5a5a5a" stroke="#333" strokeWidth=".5" vectorEffect="non-scaling-stroke" />
      <path d="M540 322C590 280 650 262 720 262C880 275 1130 450 1265 680C1290 750 1308 830 1308 905L1305 860C1290 760 1240 680 1200 640C1060 470 800 305 680 308C620 310 570 315 540 322Z" fill="url(#rimR)" stroke="#444" strokeWidth=".5" vectorEffect="non-scaling-stroke" />
      <path d="M862 365L855 405L850 405L848 495L872 532L895 525L925 490L930 470L915 395L875 375Z" fill="#8b8b8b" stroke="#444" strokeWidth=".5" vectorEffect="non-scaling-stroke" />
      <path d="M885 400V520M910 395V510" stroke="#555" strokeWidth=".7" vectorEffect="non-scaling-stroke" />
      <path d="M470 605C520 500 590 430 638 368L700 395L752 438L835 495L858 530L885 535L925 505L1000 565L1090 650L1112 662L1152 662L1192 702L1215 742L1182 790L1175 830L1187 860L1178 960L1140 1075L1135 1180L1000 980L700 720L470 690Z" fill="#00ffff" />
      <path d="M638 368L700 395L752 438L835 495L858 530L885 535L925 505L1000 565L1090 650L1112 662L1152 662L1192 702L1215 742L1182 790L1175 830" fill="none" stroke="#20d868" strokeWidth="2" strokeDasharray="2 2" vectorEffect="non-scaling-stroke" />
      <path d="M650 590L690 540L715 545L718 622L692 606Z" fill="#a8a8a8" stroke="#555" strokeWidth=".5" vectorEffect="non-scaling-stroke" />
      <Line d="M282 66L395 655" w={2.4} />
      <Line d="M232 258L650 362" w={2.8} />
      <Line d="M537 210L567 255" w={2.6} />
      <Line d="M578 272L655 375" w={2.6} />
      <Line d="M668 250L752 442" w={2.6} />
      <Line d="M50 373L590 420" w={2.8} />
      <Line d="M20 473L585 430" w={2.8} />
      <Line d="M1003 447L1112 680L1198 694" w={2.6} />
      <Line d="M1177 433L957 787" w={2.4} />
      <Line d="M1000 830L1408 612" w={2.4} />
      <Line d="M1518 680L1140 1095" w={2.4} />
      <Line d="M1203 750L1323 1185" w={2.6} />
      <Line d="M1175 825L1403 1122" w={2.6} />
      <ellipse cx="573" cy="263" rx="9" ry="10" fill="none" stroke="#f0a040" strokeWidth="2.5" vectorEffect="non-scaling-stroke" />
      <path d="M325 900L325 855C340 770 420 690 540 685C640 690 800 770 950 900C1050 1000 1120 1160 1135 1292Z" fill="#5b5b5b" stroke="#333" strokeWidth=".6" vectorEffect="non-scaling-stroke" />
      <path d="M325 880L325 855C350 700 440 600 560 590C700 590 880 710 1010 870C1100 990 1160 1130 1163 1268L1135 1293C1125 1165 1050 1000 950 900C800 770 640 690 540 685C440 690 345 770 325 880Z" fill="url(#rimF)" stroke="#333" strokeWidth=".6" vectorEffect="non-scaling-stroke" />
      {pegs.map(([cx, cy, tx, ty], i) => (
        <g key={i}>
          <path d={`M${cx - 36} ${cy - 15}L${tx - 30} ${ty + 12}C${tx - 5} ${ty - 18} ${tx + 55} ${ty - 10} ${tx + 58} ${ty + 55}L${cx + 36} ${cy + 8}Z`} fill="url(#pegG)" stroke="#555" strokeWidth=".4" vectorEffect="non-scaling-stroke" />
          <ellipse cx={cx} cy={cy} rx="38" ry="38" fill="#5e5e5e" stroke="#222" strokeWidth=".6" vectorEffect="non-scaling-stroke" />
        </g>
      ))}
      <path d="M818 1165V1012" stroke="#5c7fd6" strokeWidth="1" vectorEffect="non-scaling-stroke" />
      <path d="M811 1045L818 1010L825 1045Z" fill="#6a8fe0" />
      <path d="M820 1165L892 990" stroke="#9ee49e" strokeWidth="1.4" vectorEffect="non-scaling-stroke" />
      <path d="M880 985L902 965L896 1010Z" fill="#a8eca8" />
      <path d="M820 1165L990 1248" stroke="#e58a8a" strokeWidth="1.2" vectorEffect="non-scaling-stroke" />
      <path d="M960 1220L1002 1252L955 1244Z" fill="#f4b0b0" />
      <Thin d="M165 1410L215 1330L268 1365L240 1445L165 1410V1465L238 1508L240 1445M238 1508L268 1440V1365" c="#a9a9a9" />
      <path d="M215 1392V1335" stroke="#10338f" strokeWidth="4.5" vectorEffect="non-scaling-stroke" />
      <path d="M203 1340L215 1310L227 1340Z" fill="#10338f" />
      <path d="M243 1378L263 1310" stroke="#3ea33e" strokeWidth="4" vectorEffect="non-scaling-stroke" />
      <path d="M250 1312L272 1285L275 1320Z" fill="#3ea33e" />
      <path d="M252 1436L318 1466" stroke="#d8352a" strokeWidth="4" vectorEffect="non-scaling-stroke" />
      <path d="M310 1450L342 1478L302 1476Z" fill="#d8352a" />
    </g>
    <g fontFamily="'Liberation Sans', sans-serif" fontSize="14">
      <text x="1429" y="727" fill="#6fa76f">YM</text>
      <text x="1409" y="744" fill="#4a68c8">ZM</text>
      <text x="1487" y="855" fill="#d44">XM</text>
      <text x="1087" y="852" fill="#4a68c8" fontSize="12">Z</text>
      <text x="1121" y="849" fill="#5aa05a" fontSize="12">Y</text>
      <text x="1162" y="934" fill="#d44" fontSize="12">X</text>
    </g>
    <g opacity=".75">
      <path d="M1672 934L1709 954V994L1672 1013L1637 994V954Z" fill="#a9dcf3" />
      <path d="M1672 946L1698 959V988L1672 1002L1648 988V959Z" fill="#74c3ea" opacity=".55" />
      <path d="M1657 969L1674 960L1690 969V984L1674 992L1657 984Z" fill="#9fd8f3" />
      <path d="M1657 969L1674 977L1690 969L1674 960Z" fill="#d2effb" />
    </g>
    <text x="1718" y="982" fill="#f4f4f6" fillOpacity=".75" fontFamily="'Noto Sans CJK SC', sans-serif" fontWeight="700" fontSize="41" letterSpacing="1.5">3D世界网</text>
    <text x="1718" y="1003" fill="#f4f4f6" fillOpacity=".75" fontFamily="'Noto Sans', sans-serif" fontWeight="700" fontSize="12.5" letterSpacing="1.6">WWW.3DSJW.COM</text>
  </Scene>
);

export default function App() {
  return (
    <Page>
      <Global />
      <Head>
        <TitleBar>
          <Logo>NX</Logo>
          <Quick>
            <QSep />
            <QSlot $w={30}><White><path d="M3 2H11L13 4V14H3ZM5 2V6H11V2M5 14V9H11V14" /></White></QSlot>
            <QSep />
            <QSlot $w={28}><White><path d="M3 6H10Q14 6 14 10V14M3 6L7 2M3 6L7 10" /></White></QSlot>
            <QSlot $w={12}><Caret $light /></QSlot>
            <QSep />
            <QSlot $w={30}><White><path d="M8 8L3 3Q2 6 4 9ZM8 8L13 3Q14 6 12 9ZM8 8L4 14M8 8L12 14" /></White></QSlot>
            <QSlot $w={14}><White w={13} h={16}><path d="M2 1H9V11H2ZM6 5H13V15H6Z" /></White></QSlot>
            <QSlot $w={26}><White><g opacity=".35"><path d="M4 5H12V14H4ZM6 2H10" /></g></White></QSlot>
            <QSlot $w={16}><White><g opacity=".35"><path d="M3 8L8 3L13 8L8 13Z" /></g></White></QSlot>
            <QSep />
            <QSlot $w={30}><WhiteSvg width="18" height="18" viewBox="0 0 18 18"><path d="M4 5L10 2L14 5V12L8 15L4 12Z" fill="#b5793e" stroke="#ddd" /><circle cx="12" cy="13" r="4" fill="#fff" stroke="#333" /><path d="M10 13l1.5 1.5l2.5-3" stroke="#333" fill="none" /></WhiteSvg></QSlot>
            <QSlot $w={14}><Caret $light /></QSlot>
            <QSep />
            <QSlot $w={30}><White><path d="M3 9L9 3L13 6L8 12ZM2 13L5 11" fill="#cfe4ee" stroke="#fff" /></White></QSlot>
            <QSep />
            <QSlot $w={28}><White><path d="M3 2H10V6M3 2V14H8V6H13V14H8" /></White></QSlot>
            <QSlot $w={18}><White><path d="M2 2H14V14H2ZM2 5H14" /></White></QSlot>
            <QSlot $w={30}>窗口</QSlot>
            <QSlot $w={14}><Caret $light /></QSlot>
            <QSlot $w={12}><White w={10} h={10}><path d="M2 2H14M4 7H12L8 12Z" strokeWidth="1.5" fill="#fff" /></White></QSlot>
          </Quick>
          <DocTitle>NX - 加工</DocTitle>
          <Brand>SIEMENS</Brand>
          <WinBtn><White w={11} h={11}><path d="M3 13H12" strokeWidth="2.5" /></White></WinBtn>
          <WinBtn><White w={12} h={12}><path d="M2 6H10V14H2ZM6 6V2H14V10H10" strokeWidth="1.4" /></White></WinBtn>
          <WinBtn><White w={13} h={13}><path d="M2 1L14 15M14 1L2 15" strokeWidth="1.8" /></White></WinBtn>
        </TitleBar>
        <TabRow>
          <FileTab>文件(F)</FileTab>
          <Tab $active>主页</Tab>
          <Tab>几何体</Tab>
          <Tab>分析</Tab>
          <Tab>视图</Tab>
          <Tab>选择</Tab>
          <Tab>装配</Tab>
          <Tab>渲染</Tab>
          <Tab>工具</Tab>
          <Tab>应用模块</Tab>
          <Tab>内部</Tab>
          <Tab>国平工具v2.0.0</Tab>
          <Tab $extra={4}>QuickCAM</Tab>
          <Tab>同步建模</Tab>
          <Tab $extra={4}>MY-设计曲面</Tab>
          <Tab>MY-分析</Tab>
          <TabFill />
          <SearchBox>查找命令
            <WhiteSvg width="16" height="16" viewBox="0 0 16 16" fill="none" stroke="#444"><circle cx="10" cy="6" r="4.5" /><path d="M7 10L2 15" strokeWidth="1.5" /></WhiteSvg>
          </SearchBox>
          <Tutorial>
            <WhiteSvg width="24" height="20" viewBox="0 0 24 20"><path d="M1 7L12 2L23 7L12 12Z" fill="#111" /><path d="M6 10V15Q12 19 18 15V10L12 13Z" fill="#222" /><path d="M22 8V15" stroke="#2b9cf0" /></WhiteSvg>
            教程
            <Avatar />
          </Tutorial>
        </TabRow>
      </Head>
      <Cloud>
        <CloudIcon>
          <WhiteSvg width="22" height="18" viewBox="0 0 22 18" fill="none" stroke="#fff" strokeWidth="2.4"><circle cx="11" cy="6" r="4" /><circle cx="6" cy="12" r="4" /><circle cx="16" cy="12" r="4" /></WhiteSvg>
        </CloudIcon>
        <CloudRate>↓127 KB/s</CloudRate>
      </Cloud>

      <Ribbon>
        <Group $w={256}>
          <GroupBody $pl={5}>
            <Large1 w={72} icon="createTool" text="创建刀具" />
            <Large1 w={72} icon="createGeom" text="创建几何体" />
            <Large1 w={72} icon="createOp" text="创建工序" />
            <SmallCol $w={32}><Ico n="addBlock" /><Ico n="addCrown" /></SmallCol>
          </GroupBody>
          <GroupFoot>插入<FootCaret /></GroupFoot>
        </Group>
        <Group $w={55}>
          <GroupBody>
            <Large1 w={55} icon="attr" text="属性" dim more />
          </GroupBody>
          <GroupFoot>操作<FootCaret /></GroupFoot>
        </Group>
        <Group $w={378}>
          <GroupBody $pl={9}>
            <Large1 w={64} icon="gen" text="生成刀轨" />
            <Large1 w={66} icon="verify" text="确认刀轨" />
            <Large1 w={74} icon="vericut" text="VERICUT..." />
            <Large1 w={52} icon="post" text="后处理" />
            <Large1 w={64} icon="doc" text="车间文档" />
            <Large1 w={52} icon="moreOp" text="更多" more />
          </GroupBody>
          <GroupFoot>工序<FootCaret /></GroupFoot>
        </Group>
        <Group $w={343}>
          <GroupBody $pl={10}>
            <Large1 w={64} icon="show" text="显示刀轨" on />
            <Large1 w={64} icon="sel" text="选择刀轨" on />
            <Large1 w={62} icon="report" text="刀轨报告" />
            <SmallCol $w={44}>
              <Ghost><Ico n="cutBox" s={26} /></Ghost>
              <SmallRow><Ico n="mill" s={26} /><Caret /></SmallRow>
            </SmallCol>
            <SmallCol $w={30} $ml={18}><Ico n="upArr" /><Ico n="lay" /><Ico n="downArr" /></SmallCol>
            <Large1 w={52} icon="rainbow" text="更多" more />
          </GroupBody>
          <GroupFoot>显示<FootCaret /></GroupFoot>
        </Group>
        <Group $w={262}>
          <GroupBody $pl={10}>
            <AnimBlock>
              <AnimRow>
                <AnimSlot><Round inner={<path d="M5-6L-5 0L5 6Z" />} /></AnimSlot>
                <AnimSlot><Round inner={<path d="M-3-5V5M3-5V5M-1-5V5M1-5V5" />} /></AnimSlot>
              </AnimRow>
              <AnimRow>
                <AnimSlot><Round inner={<path d="M6-6L-3 0L6 6ZM-6-6V6" />} /><Caret /></AnimSlot>
                <AnimSlot><Round inner={<path d="M-6-6L3 0L-6 6ZM6-6V6" />} /><Caret /></AnimSlot>
              </AnimRow>
            </AnimBlock>
            <Large $w={36}>
              <LargeIcon><Round r={16.5} inner={<path d="M-5-8L7 0L-5 8Z" />} /></LargeIcon>
              <LargeText>播放</LargeText>
            </Large>
            <SliderWrap>
              <Track><Thumb /></Track>
              <SpeedText>速度</SpeedText>
            </SliderWrap>
          </GroupBody>
          <GroupFoot>刀轨动画<FootCaret /></GroupFoot>
        </Group>
        <Group $w={122}>
          <GroupBody $pl={2}>
            <Large1 w={76} icon="stairs" text="显示 IPW" />
            <Large1 w={36} icon="scope" text="分析" more />
          </GroupBody>
          <GroupFoot>IPW<FootCaret /></GroupFoot>
        </Group>
        <Group $w={150}>
          <GroupBody>
            <ToolGrid>
              <ToolLine>
                <ToolCell $w={23}><Ico n="gcA" s={19} /></ToolCell>
                <ToolCell $w={24}><Ico n="gcB" s={19} /></ToolCell>
                <ToolCell $w={22}><Ico n="gcC" s={19} /></ToolCell>
                <ToolCell $w={24}><Ico n="gcD" s={19} /></ToolCell>
                <ToolCell $w={1}><VSep /></ToolCell>
                <ToolCell $w={28}><Ico n="gcE" s={19} /></ToolCell>
              </ToolLine>
              <ToolLine>
                <ToolCell $w={23}><Ico n="gcF" s={19} /></ToolCell>
                <ToolCell $w={22}><Ico n="gcG" s={19} /></ToolCell>
                <ToolCell $w={3}><VSep /></ToolCell>
                <ToolCell $w={26}><Ico n="gcH" s={19} /></ToolCell>
                <ToolCell $w={24}><Ico n="gcI" s={19} /></ToolCell>
                <ToolCell $w={22}><Ico n="gcJ" s={19} /></ToolCell>
                <ToolCell $w={22}><Ico n="gcK" s={19} /></ToolCell>
              </ToolLine>
            </ToolGrid>
          </GroupBody>
          <GroupFoot>加工工具 - GC工具...<FootCaret $r={6} /></GroupFoot>
        </Group>
        <Group $w={281}>
          <GroupBody $pl={6}>
            <Large1 w={69} icon="find" text="查找特征" />
            <Large1 w={88} icon="feat" text="创建特征工艺" />
            <Large1 w={68} icon="teach" text="示教特征" />
            <Large1 w={52} icon="more2" text="更多" more />
          </GroupBody>
          <GroupFoot $pr={0}>特征<FootCaret /></GroupFoot>
        </Group>
        <Group $w={73} $end>
          <GroupBody />
          <GroupFoot><FootCaret /></GroupFoot>
        </Group>
      </Ribbon>
      <Ball>69</Ball>

      <Toolbar>
        <MenuBtn>
          <WhiteSvg width="17" height="14" viewBox="0 0 17 14"><path d="M1 1.5H16M1 7H16M1 12.5H16" stroke="#444" /></WhiteSvg>
          <MenuText>菜单(<u>M</u>)</MenuText>
          <Caret />
        </MenuBtn>
        {tbA.map((n, i) => <Tb key={n} $on={i === 0} $w={i === 0 ? 32 : 33}><Ico n={n} /></Tb>)}
        <TbSep $ml={1} $mr={13} />
        <Combo $w={182}>刀轨<ComboCaret /></Combo>
        <Tb $w={42}><Ico n="funnelA" /></Tb>
        <Combo $w={191}>整个装配<ComboCaret /></Combo>
        <Tb $w={4} />
        <Tb><Ico n="part" /></Tb>
        <Tb><Ico n="tank" /></Tb>
        <Tb><Ico n="funnelB" /></Tb>
        <Tb $w={11}><Caret /></Tb>
        <Tb><Ico n="crossO" /></Tb>
        <Tb><Ico n="cubeO" /></Tb>
        <Tb $w={34}><Ico n="squareO" /></Tb>
        <Tb $w={18}><Caret /></Tb>
        <Tb $w={32} $on $ml={1}><Ico n="hlCube" /></Tb>
        <Tb $w={32} $on $ml={2}><Ico n="hlCyl" /></Tb>
        <Tb><Ico n="layGear" /></Tb>
        <Tb $w={31}><Ico n="layEdit" /></Tb>
        <Tb $w={31}><Ico n="layCopy" /></Tb>
        <TbSep $ml={9} $mr={6} />
        <Tb $w={32} $on><Ico n="mcs" /></Tb>
        <Tb><Ico n="axisEye" /></Tb>
        <Tb $w={31}><Ico n="noEye" /></Tb>
        <TbSep $ml={8} $mr={4} />
        {tbC.map((n, i) => <Tb key={i}><Ico n={n} /></Tb>)}
        <TbSep $ml={5} $mr={0} />
        <Tb $w={116}><TailCaret /></Tb>
      </Toolbar>

      <Main>
        <Side>
          {side.map((s, i) => (
            <SideItem key={i} $h={s.h} $mt={s.mt} $on={s.on}><Ico n={s.n} s={s.s} /></SideItem>
          ))}
        </Side>
        <Nav>
          <NavTitle>工序导航器 - 程序顺序<MaxBox /></NavTitle>
          <TableBox>
            <HeadRow>{heads.map((h, i) => <HeadCell key={i}>{h}</HeadCell>)}</HeadRow>
            <BodyWrap>
              <List>
                {rows.map(r => (
                  <Row key={r.name}>
                    <NameCell $lv={2}>
                      <Trunk $end={r.name === 'VARIABLE_CONTOUR_7'} />
                      <Twig $lv={2} />
                      <NameIcons>
                        {r.st === 'ok' ? <Check s={14} /> : <Warn />}
                        <OpIcon t={r.op} />
                      </NameIcons>
                      <NameText $sel={r.sel} $blue={r.blue}>{r.name}</NameText>
                    </NameCell>
                    <ChangeCell $sel={r.sel}>{r.chg && <Change />}</ChangeCell>
                    <StateCell $sel={r.sel}>{r.done === 'ok' ? <Check /> : <Hook />}</StateCell>
                    <Cell $sel={r.sel} $blue={r.blue}>{r.tool}</Cell>
                    <Cell $sel={r.sel} $blue={r.blue}>{r.no}</Cell>
                    <Cell $sel={r.sel} $blue={r.blue}>{r.depth}</Cell>
                    <Cell $sel={r.sel} $blue={r.blue}>{r.stock}</Cell>
                    <Cell $sel={r.sel} $blue={r.blue}>{r.floor}</Cell>
                    <Cell $sel={r.sel} $blue={r.blue}>NC01</Cell>
                    <Cell $sel={r.sel} $blue={r.blue}>{r.speed}</Cell>
                  </Row>
                ))}
                {['2', '3'].map(t => (
                  <Row key={t}>
                    <NameCell $lv={1} $last={t === '3'}>
                      <Twig $lv={1} />
                      <NameIcons><Check s={14} /><OpIcon t="g" /></NameIcons>
                      <NameText>{t}</NameText>
                    </NameCell>
                    {Array.from({ length: 9 }).map((_, i) => <Cell key={i} />)}
                  </Row>
                ))}
                <ColGuide>{Array.from({ length: 10 }).map((_, i) => <ColLine key={i} />)}</ColGuide>
                <Focus />
              </List>
              <VScroll>
                <UpArrow />
                <VThumb><VGrip /></VThumb>
                <DownArrow />
              </VScroll>
            </BodyWrap>
          </TableBox>
          <HScroll>
            <LeftArr />
            <HThumb><HGrip /></HThumb>
            <RightArr />
          </HScroll>
          <Stripe />
          <Fold><FoldArrow />相关性</Fold>
          <Fold><FoldArrow />细节</Fold>
        </Nav>
        <Stage>
          <DocTabs>
            <DocTab>
              <WhiteSvg width="15" height="15" viewBox="0 0 15 15" fill="none" stroke="#fff"><path d="M2 3H6V6H2V9H6V12H2M9 5Q11 3 13 6M13 10Q11 12 9 9" /></WhiteSvg>
              五轴爬面神器_stp.prt
              <WhiteSvg width="10" height="12" viewBox="0 0 10 12" fill="none" stroke="#fff"><path d="M2 1H7L9 3V11H2ZM4 5H7M4 8H7" /></WhiteSvg>
              <WhiteSvg width="10" height="10" viewBox="0 0 10 10" stroke="#fff" strokeWidth="2"><path d="M1 1L9 9M9 1L1 9" /></WhiteSvg>
            </DocTab>
          </DocTabs>
          <View><Part /></View>
        </Stage>
        <Strip>
          {strip.map(n => <StripItem key={n}><Ico n={n} /></StripItem>)}
          <StripSep />
          <StripArrow />
        </Strip>
      </Main>
      <Status>7 个对象 已选定</Status>
    </Page>
  );
}
